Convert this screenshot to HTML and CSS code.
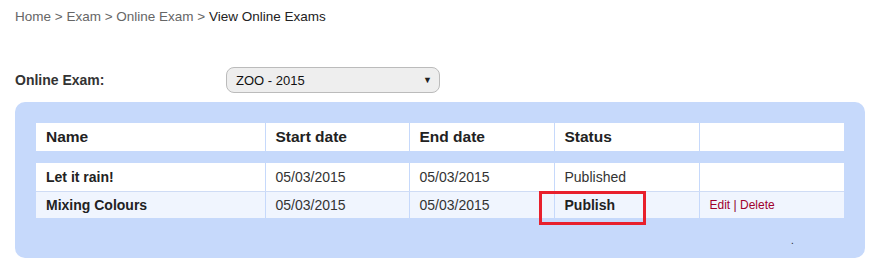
FILE: index.html
```html
<!DOCTYPE html>
<html lang="en">
<head>
<meta charset="UTF-8">
<meta name="viewport" content="width=device-width, initial-scale=1.0">
<title>View Online Exams</title>
<link rel="stylesheet" href="styles.css">
</head>
<body>

<div class="breadcrumb">
    <a href="#">Home</a> &gt; <a href="#">Exam</a> &gt; <a href="#">Online Exam</a> &gt; <span class="current">View Online Exams</span>
</div>

<form class="filter">
    <label for="exam">Online Exam:</label>
    <div class="select-box" id="exam">
        <span>ZOO - 2015</span>
        <span class="arrow">&#9660;</span>
    </div>
</form>

<div class="panel">
    <table class="grid head">
        <colgroup>
            <col class="c-name"><col class="c-start"><col class="c-date"><col class="c-date"><col class="c-date">
        </colgroup>
        <tr>
            <th>Name</th>
            <th>Start date</th>
            <th>End date</th>
            <th>Status</th>
            <th></th>
        </tr>
    </table>

    <table class="grid body">
        <colgroup>
            <col class="c-name"><col class="c-start"><col class="c-date"><col class="c-date"><col class="c-date">
        </colgroup>
        <tr class="first">
            <td class="name">Let it rain!</td>
            <td>05/03/2015</td>
            <td>05/03/2015</td>
            <td>Published</td>
            <td></td>
        </tr>
        <tr class="alt">
            <td class="name">Mixing Colours</td>
            <td>05/03/2015</td>
            <td>05/03/2015</td>
            <td class="status"><b>Publish</b><span class="highlight"></span></td>
            <td class="actions"><a href="#">Edit</a> | <a href="#">Delete</a></td>
        </tr>
    </table>
    <span class="dot">.</span>
</div>

</body>
</html>
```

FILE: styles.css
```css
body {
    margin: 0;
    padding: 0 15px;
    font-family: "Liberation Sans", Arial, sans-serif;
    color: #222;
    background: #fff;
}

.breadcrumb {
    margin-top: 9px;
    font-size: 13.5px;
    line-height: 16px;
    color: #666;
}

.breadcrumb a {
    color: #666;
    text-decoration: none;
}

.breadcrumb .current {
    color: #222;
}

.filter {
    display: grid;
    grid-template-columns: 211px 214px;
    align-items: center;
    margin-top: 42px;
}

.filter label {
    font-size: 14px;
    font-weight: bold;
    color: #333;
}

.select-box {
    display: flex;
    justify-content: space-between;
    align-items: center;
    height: 24px;
    padding: 0 7px 0 9px;
    border: 1px solid #bbb;
    border-radius: 8px;
    background: #eee;
    font-size: 13px;
    color: #111;
}

.select-box .arrow {
    font-size: 9px;
    color: #222;
}

.panel {
    position: relative;
    width: 808px;
    margin-top: 9px;
    padding: 21px 21px 40px;
    border-radius: 10px;
    background: #c6d9fb;
}

.grid {
    width: 808px;
    table-layout: fixed;
    border-collapse: collapse;
    background: #fff;
}

.c-name {
    width: 229px;
}

.c-start {
    width: 144px;
}

.c-date {
    width: 145px;
}

.grid th,
.grid td {
    padding: 0 10px;
    border-left: 1px solid #c6d9fb;
    text-align: left;
    white-space: nowrap;
}

.grid th:first-child,
.grid td:first-child {
    border-left: none;
}

.head th {
    height: 28px;
    font-size: 15.5px;
    font-weight: bold;
    color: #222;
}

.body {
    margin-top: 12px;
}

.body td {
    font-size: 14px;
    color: #333;
}

.body .first td {
    height: 28px;
    border-bottom: 1px solid #cfdcf5;
}

.body .alt td {
    height: 26px;
    background: #f0f5fe;
}

.body td.name,
.body td b {
    font-weight: bold;
    color: #222;
}

.status {
    position: relative;
}

.highlight {
    position: absolute;
    left: -16px;
    top: -1px;
    width: 101px;
    height: 28px;
    border: 3px solid #e8202c;
}

.actions {
    font-size: 12px !important;
    color: #8a0026 !important;
}

.actions a {
    color: #a0002c;
    text-decoration: none;
}

.dot {
    position: absolute;
    left: 776px;
    top: 134px;
    font-size: 10px;
    line-height: 10px;
    color: #222;
}
```
